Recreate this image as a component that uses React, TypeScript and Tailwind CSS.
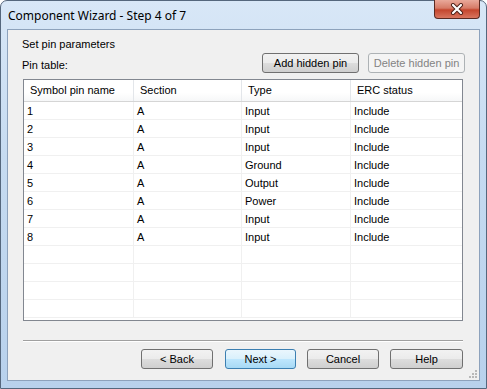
import React from 'react';

const rows = [
  { n: '1', s: 'A', t: 'Input', e: 'Include' },
  { n: '2', s: 'A', t: 'Input', e: 'Include' },
  { n: '3', s: 'A', t: 'Input', e: 'Include' },
  { n: '4', s: 'A', t: 'Ground', e: 'Include' },
  { n: '5', s: 'A', t: 'Output', e: 'Include' },
  { n: '6', s: 'A', t: 'Power', e: 'Include' },
  { n: '7', s: 'A', t: 'Input', e: 'Include' },
  { n: '8', s: 'A', t: 'Input', e: 'Include' },
  { n: '', s: '', t: '', e: '' },
  { n: '', s: '', t: '', e: '' },
  { n: '', s: '', t: '', e: '' },
  { n: '', s: '', t: '', e: '' },
];

function Btn({ label, w, primary, disabled }: { label: string; w: string; primary?: boolean; disabled?: boolean }) {
  const cls = disabled
    ? 'border-[#adb2b5] bg-[#f4f4f4] text-[#838383]'
    : primary
    ? 'border-[#3c7fb1] bg-[linear-gradient(#eaf6fd_0%,#d9f0fc_50%,#bee6fd_51%,#a7d9f5_100%)] text-black'
    : 'border-[#707070] bg-[linear-gradient(#f2f2f2_0%,#ebebeb_50%,#dddddd_51%,#cfcfcf_100%)] text-black';
  return (
    <div className={`${w} h-[20px] border rounded-[3px] flex items-center justify-center ${cls}`}>
      {label}
    </div>
  );
}

export default function App() {
  return (
    <div className="w-[487px] h-[389px] bg-white" style={{ fontFamily: '"Liberation Sans", Arial, sans-serif' }}>
      <div className="w-full h-full rounded-t-[7px] border border-[#55677d] bg-[linear-gradient(180deg,#d8e7f7_0%,#c6dbf1_40%,#b8d1ec_100%)] flex flex-col">
        {/* Title bar */}
        <div className="h-[28px] flex justify-between shrink-0">
          <div className="pl-[7px] pt-[6px] text-[12px] text-black" style={{ fontFamily: '"Noto Sans", "Open Sans", sans-serif' }}>
            Component Wizard - Step 4 of 7
          </div>
          <div className="mr-[6px] w-[46px] h-[19px] -mt-px rounded-b-[4px] border border-[#5a2a22] border-t-0 bg-[linear-gradient(180deg,#e9a99a_0%,#d67b67_45%,#c4462e_55%,#d8755f_100%)] flex items-center justify-center">
            <svg width="14" height="12" viewBox="0 0 14 12">
              <path d="M3 2 L11 10 M11 2 L3 10" stroke="#4a1d15" strokeWidth="4" strokeLinecap="round" />
              <path d="M3 2 L11 10 M11 2 L3 10" stroke="#ffffff" strokeWidth="2.2" strokeLinecap="round" />
            </svg>
          </div>
        </div>

        {/* Client area */}
        <div className="mx-[6px] mb-[7px] flex-1 border border-[#8da2bc] bg-[#f0f0f0] text-[11px] text-black flex flex-col px-[14px] relative">
          <div className="h-[13px] mt-[8px] leading-[13px]">Set pin parameters</div>
          <div className="flex items-end justify-between mt-[4px] h-[18px]">
            <div className="leading-[13px] mb-[1px]">Pin table:</div>
            <div className="flex gap-[9px]">
              <Btn label="Add hidden pin" w="w-[97px]" />
              <Btn label="Delete hidden pin" w="w-[97px]" disabled />
            </div>
          </div>

          {/* Table */}
          <div className="mt-[6px] ml-[1px] w-[440px] h-[242px] border border-[#828790] bg-white">
            <div className="grid grid-cols-[110px_108px_109px_1fr] h-[22px] border-b border-[#d5d5d5] bg-[linear-gradient(#ffffff_0%,#ffffff_60%,#f6f7f8_100%)]">
              {['Symbol pin name', 'Section', 'Type', 'ERC status'].map((h, i) => (
                <div key={h} className={`flex items-center pl-[6px] ${i < 3 ? 'border-r border-[#e3e6ea]' : ''}`}>
                  {h}
                </div>
              ))}
            </div>
            {rows.map((r, i) => (
              <div key={i} className="grid grid-cols-[110px_108px_109px_1fr] h-[18px] border-b border-[#f0f0f0]">
                {[r.n, r.s, r.t, r.e].map((c, j) => (
                  <div key={j} className={`flex items-center pl-[3px] pt-[1px] ${j < 3 ? 'border-r border-[#f0f0f0]' : ''}`}>
                    {c}
                  </div>
                ))}
              </div>
            ))}
          </div>

          <div className="mt-[19px] ml-[1px] w-[440px] h-[2px] border-t border-[#a0a0a0] border-b-white border-b" />

          <div className="flex justify-end gap-[11px] mt-[7px] pr-[2px]">
            <div className="mr-px">
              <Btn label="< Back" w="w-[72px]" />
            </div>
            <Btn label="Next >" w="w-[71px]" primary />
            <Btn label="Cancel" w="w-[72px]" />
            <Btn label="Help" w="w-[73px]" />
          </div>

          <svg className="absolute right-[1px] bottom-[1px]" width="10" height="10" viewBox="0 0 10 10">
            {[
              [7, 1],
              [4, 4],
              [7, 4],
              [1, 7],
              [4, 7],
              [7, 7],
            ].map(([x, y], k) => (
              <rect key={k} x={x} y={y} width="2" height="2" fill="#b8b8b8" />
            ))}
          </svg>
        </div>
      </div>
    </div>
  );
}
